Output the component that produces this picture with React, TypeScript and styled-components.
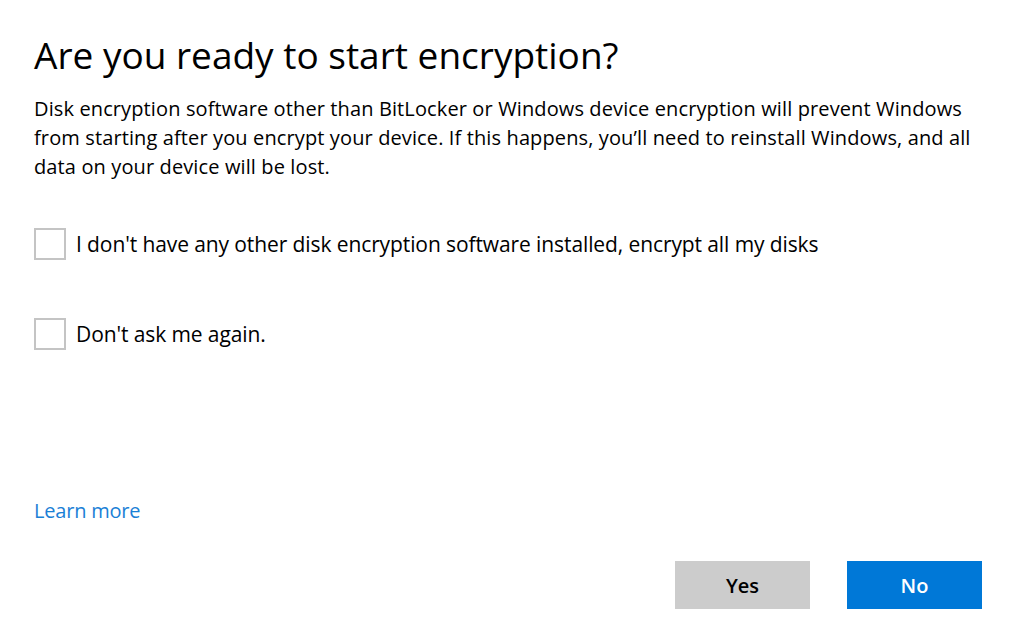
import React from 'react'
import styled, { createGlobalStyle } from 'styled-components'

const GlobalStyle = createGlobalStyle`
  html, body {
    margin: 0;
    padding: 0;
    background: #ffffff;
  }
  body {
    font-family: "Open Sans", "Noto Sans", "Liberation Sans", sans-serif;
    color: #000000;
  }
`

export default function App() {
  return (
    <>
      <GlobalStyle />
      <Dialog>
        <Title>Are you ready to start encryption?</Title>
        <Body>
          Disk encryption software other than BitLocker or Windows device encryption will prevent Windows
          <br />
          from starting after you encrypt your device. If this happens, you’ll need to reinstall Windows, and all
          <br />
          data on your device will be lost.
        </Body>
        <Options>
          <Option>
            <Box type="checkbox" />
            <span>I don't have any other disk encryption software installed, encrypt all my disks</span>
          </Option>
          <Option>
            <Box type="checkbox" />
            <span>Don't ask me again.</span>
          </Option>
        </Options>
        <Spacer />
        <Link href="#">Learn more</Link>
        <Actions>
          <Button>Yes</Button>
          <Button primary>No</Button>
        </Actions>
      </Dialog>
    </>
  )
}

const Dialog = styled.div`
  height: 642px;
  box-sizing: border-box;
  padding: 31px 32px 33px 34px;
  display: flex;
  flex-direction: column;
`

const Title = styled.h1`
  margin: 0;
  font-size: 37px;
  font-weight: 400;
  line-height: 48px;
`

const Body = styled.p`
  margin: 15px 0 0;
  font-size: 20px;
  line-height: 29px;
  letter-spacing: 0.12px;
`

const Options = styled.div`
  margin-top: 47px;
  display: flex;
  flex-direction: column;
  gap: 58px;
`

const Option = styled.label`
  display: flex;
  align-items: center;
  gap: 10px;
  font-size: 21px;
  line-height: 32px;
  letter-spacing: -0.1px;
`

const Box = styled.input`
  appearance: none;
  margin: 0;
  width: 32px;
  height: 32px;
  box-sizing: border-box;
  border: 2px solid #c4c4c4;
  background: #ffffff;
  flex-shrink: 0;
`

const Spacer = styled.div`
  flex: 1;
`

const Link = styled.a`
  align-self: flex-start;
  font-size: 20px;
  line-height: 28px;
  color: #1a80d6;
  text-decoration: none;
  letter-spacing: -0.2px;
`

const Actions = styled.div`
  margin-top: 36px;
  display: flex;
  justify-content: flex-end;
  gap: 37px;
`

const Button = styled.button<{ primary?: boolean }>`
  width: 135px;
  height: 48px;
  border: none;
  margin: 0;
  font-family: inherit;
  font-size: 20px;
  font-weight: 600;
  background: ${(p) => (p.primary ? '#0078d7' : '#cccccc')};
  color: ${(p) => (p.primary ? '#ffffff' : '#000000')};
`
